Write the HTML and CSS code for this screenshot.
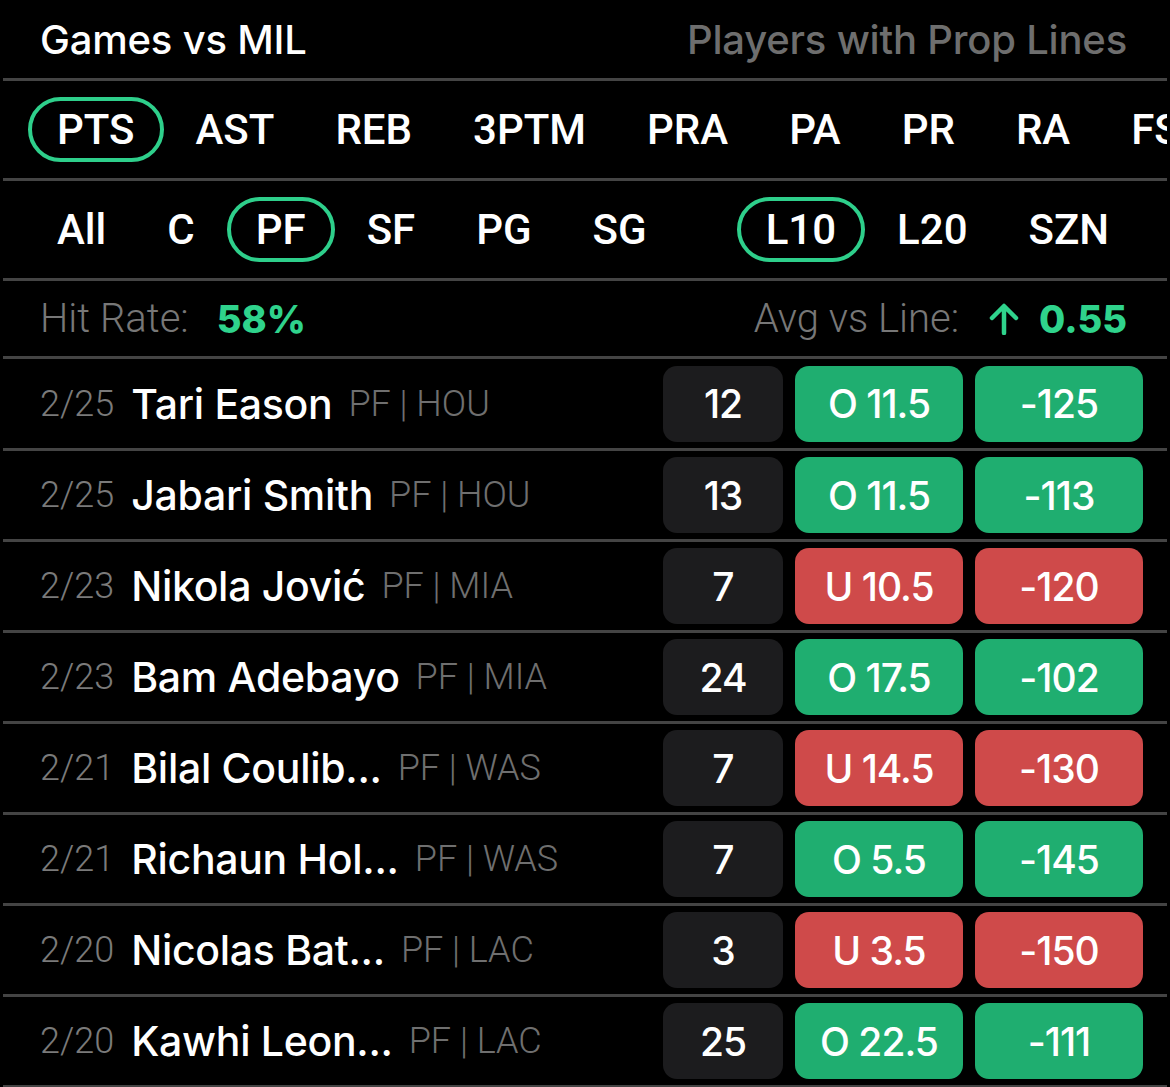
FILE: index.html
```html
<!DOCTYPE html>
<html lang="en">
<head>
<meta charset="utf-8">
<title>Games vs MIL</title>
<link rel="stylesheet" href="styles.css">
</head>
<body>
<div class="screen">
  <header class="top">
    <h1 class="title">Games vs MIL</h1>
    <span class="sub">Players with Prop Lines</span>
  </header>

  <nav class="tabs">
    <span class="tab active">PTS</span>
    <span class="tab">AST</span>
    <span class="tab">REB</span>
    <span class="tab">3PTM</span>
    <span class="tab">PRA</span>
    <span class="tab">PA</span>
    <span class="tab">PR</span>
    <span class="tab">RA</span>
    <span class="tab">FS</span>
  </nav>

  <nav class="tabs">
    <div class="group">
      <span class="tab">All</span>
      <span class="tab">C</span>
      <span class="tab active">PF</span>
      <span class="tab">SF</span>
      <span class="tab">PG</span>
      <span class="tab">SG</span>
    </div>
    <div class="group range">
      <span class="tab active">L10</span>
      <span class="tab">L20</span>
      <span class="tab">SZN</span>
    </div>
  </nav>

  <div class="summary">
    <div class="stat"><span class="label">Hit Rate:</span><span class="value">58%</span></div>
    <div class="stat">
      <span class="label">Avg vs Line:</span>
      <svg class="arrow" viewBox="0 0 34 32" width="34" height="32" aria-hidden="true">
        <path d="M17 30 V4 M5 15 L17 3 L29 15" fill="none" stroke="#2fd38c" stroke-width="4.5" stroke-linecap="round" stroke-linejoin="round"/>
      </svg>
      <span class="value">0.55</span>
    </div>
  </div>

  <ul class="games">
    <li class="row">
      <span class="date">2/25</span><span class="name">Tari Eason</span><span class="meta">PF | HOU</span>
      <span class="pill count">12</span><span class="pill over">O 11.5</span><span class="pill over">-125</span>
    </li>
    <li class="row">
      <span class="date">2/25</span><span class="name">Jabari Smith</span><span class="meta">PF | HOU</span>
      <span class="pill count">13</span><span class="pill over">O 11.5</span><span class="pill over">-113</span>
    </li>
    <li class="row">
      <span class="date">2/23</span><span class="name">Nikola Jović</span><span class="meta">PF | MIA</span>
      <span class="pill count">7</span><span class="pill under">U 10.5</span><span class="pill under">-120</span>
    </li>
    <li class="row">
      <span class="date">2/23</span><span class="name">Bam Adebayo</span><span class="meta">PF | MIA</span>
      <span class="pill count">24</span><span class="pill over">O 17.5</span><span class="pill over">-102</span>
    </li>
    <li class="row">
      <span class="date">2/21</span><span class="name">Bilal Coulib...</span><span class="meta">PF | WAS</span>
      <span class="pill count">7</span><span class="pill under">U 14.5</span><span class="pill under">-130</span>
    </li>
    <li class="row">
      <span class="date">2/21</span><span class="name">Richaun Hol...</span><span class="meta">PF | WAS</span>
      <span class="pill count">7</span><span class="pill over">O 5.5</span><span class="pill over">-145</span>
    </li>
    <li class="row">
      <span class="date">2/20</span><span class="name">Nicolas Bat...</span><span class="meta">PF | LAC</span>
      <span class="pill count">3</span><span class="pill under">U 3.5</span><span class="pill under">-150</span>
    </li>
    <li class="row">
      <span class="date">2/20</span><span class="name">Kawhi Leon...</span><span class="meta">PF | LAC</span>
      <span class="pill count">25</span><span class="pill over">O 22.5</span><span class="pill over">-111</span>
    </li>
  </ul>
</div>
</body>
</html>
```

FILE: styles.css
```css
* { box-sizing: border-box; }

html, body {
  margin: 0;
  padding: 0;
  background: #000;
  color: #fff;
  font-family: Inter, "Noto Sans", "Liberation Sans", sans-serif;
}

.screen {
  margin: 0 3px;
  overflow: hidden;
}

.top {
  height: 81px;
  display: flex;
  align-items: center;
  justify-content: space-between;
  padding: 0 40px 0 37px;
  border-bottom: 3px solid #444;
}

.title {
  margin: 0;
  font-size: 40px;
  font-weight: 500;
  letter-spacing: -0.2px;
}

.sub {
  font-size: 40px;
  font-weight: 500;
  color: #6e6e6e;
  letter-spacing: -0.2px;
}

.tabs {
  height: 100px;
  display: flex;
  align-items: center;
  padding-left: 25px;
  border-bottom: 3px solid #444;
  white-space: nowrap;
  overflow: hidden;
}

.group {
  display: flex;
  align-items: center;
}

.range {
  margin-left: 58px;
}

.tab {
  flex: none;
  height: 65px;
  display: flex;
  align-items: center;
  padding: 0 25px;
  margin-right: 3px;
  border: 4px solid transparent;
  border-radius: 33px;
  font-family: Roboto, "Liberation Sans", sans-serif;
  font-size: 42px;
  font-weight: 500;
  color: #fff;
}

.tab.active {
  border-color: #2ecf8b;
}

.summary {
  height: 78px;
  display: flex;
  align-items: center;
  justify-content: space-between;
  padding: 0 40px 0 37px;
  border-bottom: 3px solid #444;
}

.stat {
  display: flex;
  align-items: center;
}

.label {
  font-family: Roboto, "Liberation Sans", sans-serif;
  font-weight: 300;
  font-size: 40px;
  color: #777;
}

.value {
  font-family: Inter, "Liberation Sans", sans-serif;
  font-weight: 800;
  font-size: 38px;
  color: #2fd38c;
  margin-left: 28px;
}

.arrow {
  margin-left: 28px;
}

.arrow + .value {
  margin-left: 18px;
}

.games {
  list-style: none;
  margin: 0;
  padding: 0;
}

.row {
  height: 91px;
  display: flex;
  align-items: center;
  padding: 0 24px 0 37px;
  border-bottom: 3px solid #444;
}

.row:first-child {
  height: 92px;
}

.date {
  font-family: Roboto, "Liberation Sans", sans-serif;
  font-weight: 300;
  font-size: 36px;
  color: #7a7a7a;
}

.name {
  margin-left: 17px;
  font-size: 41px;
  font-weight: 500;
  letter-spacing: -0.3px;
  white-space: nowrap;
}

.meta {
  margin-left: 16px;
  font-family: Roboto, "Liberation Sans", sans-serif;
  font-weight: 300;
  font-size: 36px;
  color: #6f6f6f;
  white-space: nowrap;
}

.pill {
  flex: none;
  height: 76px;
  width: 168px;
  margin-left: 12px;
  border-radius: 14px;
  display: flex;
  align-items: center;
  justify-content: center;
  font-size: 39px;
  font-weight: 500;
  letter-spacing: -1px;
  color: #fff;
}

.pill.count {
  width: 120px;
  margin-left: auto;
  background: #1c1c1e;
}

.pill.over {
  background: #1fae70;
}

.pill.under {
  background: #cf4a4a;
}
```
